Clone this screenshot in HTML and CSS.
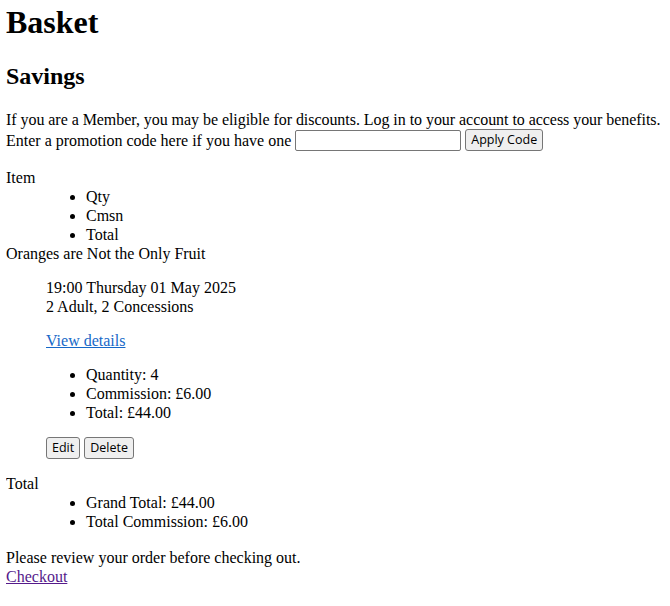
FILE: index.html
```html
<!DOCTYPE html>
<html lang="en">
<head>
<meta charset="utf-8">
<title>Basket</title>
<link rel="stylesheet" href="styles.css">
</head>
<body>
<h1 class="title">Basket</h1>
<h2 class="subtitle">Savings</h2>
<div class="savings">
  <div class="intro">If you are a Member, you may be eligible for discounts. Log in to your account to access your benefits.</div>
  <form class="promo">Enter a promotion code here if you have one <input class="promo-input" type="text"> <button class="btn" type="button">Apply Code</button></form>
</div>
<div class="basket">
  <div class="head">Item</div>
  <ul class="cols">
    <li>Qty</li>
    <li>Cmsn</li>
    <li>Total</li>
  </ul>
  <div class="item-name">Oranges are Not the Only Fruit</div>
  <div class="item-body">
    <p class="block">19:00 Thursday 01 May 2025<br>2 Adult, 2 Concessions</p>
    <p class="block"><a class="link" href="#">View details</a></p>
    <ul class="figures">
      <li>Quantity: 4</li>
      <li>Commission: £6.00</li>
      <li>Total: £44.00</li>
    </ul>
    <p class="block actions"><button class="btn" type="button">Edit</button><button class="btn" type="button">Delete</button></p>
  </div>
  <div class="head">Total</div>
  <ul class="cols">
    <li>Grand Total: £44.00</li>
    <li>Total Commission: £6.00</li>
  </ul>
</div>
<div class="footer">
  <div>Please review your order before checking out.</div>
  <a class="checkout" href="#">Checkout</a>
</div>
</body>
</html>
```
FILE: styles.css
```css
html { background: #fff; }
body {
  margin: 0 6px;
  font-family: "Liberation Serif", "Times New Roman", serif;
  font-size: 16px;
  line-height: 19px;
  color: #000;
}
.title {
  font-size: 32px;
  line-height: 37px;
  margin: 4px 0 21px;
}
.subtitle {
  font-size: 24px;
  line-height: 28px;
  margin: 0 0 20px;
}
.intro { white-space: nowrap; letter-spacing: -0.05px; }
.savings { margin-bottom: 17px; }
.promo { margin: 0; display: flex; align-items: center; gap: 4px; }
.promo-input {
  width: 160px;
  height: 17px;
  border: 1px solid #767676;
  border-radius: 2px;
  padding: 1px 2px;
  margin: 0;
}
.btn {
  font-family: "Open Sans", "Noto Sans", sans-serif;
  font-size: 12.5px;
  line-height: 14px;
  padding: 3px 5px;
  border: 1px solid #767676;
  border-radius: 3px;
  background: #efefef;
  color: #000;
  margin: 0;
}
.cols, .figures {
  margin: 0;
  padding-left: 80px;
}
.figures { margin: 15px 0 0; padding-left: 40px; }
.item-body { margin-left: 40px; }
.block { margin: 15px 0 0; }
.actions { display: flex; gap: 4px; }
.item-body .block:last-child { margin-bottom: 15px; }
.link { color: #1668c8; }
.footer { margin-top: 17px; }
.checkout { color: #551a8b; }
```
